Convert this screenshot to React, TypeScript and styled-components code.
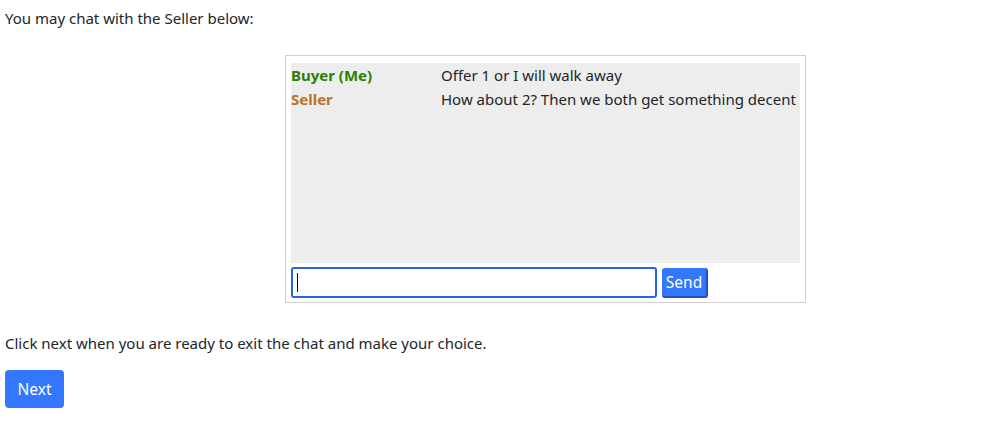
import React from "react";
import styled, { createGlobalStyle } from "styled-components";

const Global = createGlobalStyle`
  html, body { margin: 0; padding: 0; background: #fff; }
  body {
    font-family: "Noto Sans", "Open Sans", sans-serif;
    font-size: 15px;
    color: #212529;
  }
`;

const Page = styled.div`
  padding: 6px 5px;
  display: flex;
  flex-direction: column;
`;

const Para = styled.p`
  margin: 0;
  line-height: 24px;
`;

const ChatWrap = styled.div`
  display: flex;
  justify-content: flex-start;
  padding-left: 280px;
  margin: 25px 0 28px 0;
`;

const ChatBox = styled.div`
  width: 509px;
  border: 1px solid #cfcfcf;
  padding: 7px 5px 4px 5px;
  display: flex;
  flex-direction: column;
  gap: 4px;
`;

const Log = styled.div`
  background: #ededed;
  height: 200px;
  display: flex;
  flex-direction: column;
`;

const Row = styled.div`
  display: grid;
  grid-template-columns: 150px 1fr;
  line-height: 24px;
`;

const Name = styled.span<{ $color: string }>`
  font-weight: 700;
  color: ${(p) => p.$color};
`;

const InputRow = styled.div`
  display: flex;
  align-items: center;
  gap: 5px;
`;

const Input = styled.div`
  width: 358px;
  height: 27px;
  border: 2px solid #2563e0;
  border-radius: 3px;
  display: flex;
  align-items: center;
  padding-left: 4px;
`;

const Caret = styled.span`
  width: 1px;
  height: 19px;
  background: #000;
`;

const SendBtn = styled.button`
  font-family: inherit;
  font-size: 15.5px;
  background: #3377ff;
  color: #fff;
  border: none;
  border-right: 2px solid #2251c4;
  border-bottom: 2px solid #2251c4;
  border-radius: 3px;
  height: 30px;
  width: 46px;
  padding: 0;
`;

const NextBtn = styled.button`
  align-self: flex-start;
  font-family: inherit;
  font-size: 15.5px;
  background: #3377ff;
  color: #fff;
  border: none;
  border-radius: 4px;
  height: 38px;
  width: 59px;
  padding: 0;
  margin-top: 15px;
`;

export default function App() {
  return (
    <>
      <Global />
      <Page>
        <Para>You may chat with the Seller below:</Para>
        <ChatWrap>
          <ChatBox>
            <Log>
              <Row>
                <Name $color="#2a8000">Buyer (Me)</Name>
                <span>Offer 1 or I will walk away</span>
              </Row>
              <Row>
                <Name $color="#b8732f">Seller</Name>
                <span>How about 2? Then we both get something decent</span>
              </Row>
            </Log>
            <InputRow>
              <Input>
                <Caret />
              </Input>
              <SendBtn>Send</SendBtn>
            </InputRow>
          </ChatBox>
        </ChatWrap>
        <Para>Click next when you are ready to exit the chat and make your choice.</Para>
        <NextBtn>Next</NextBtn>
      </Page>
    </>
  );
}
